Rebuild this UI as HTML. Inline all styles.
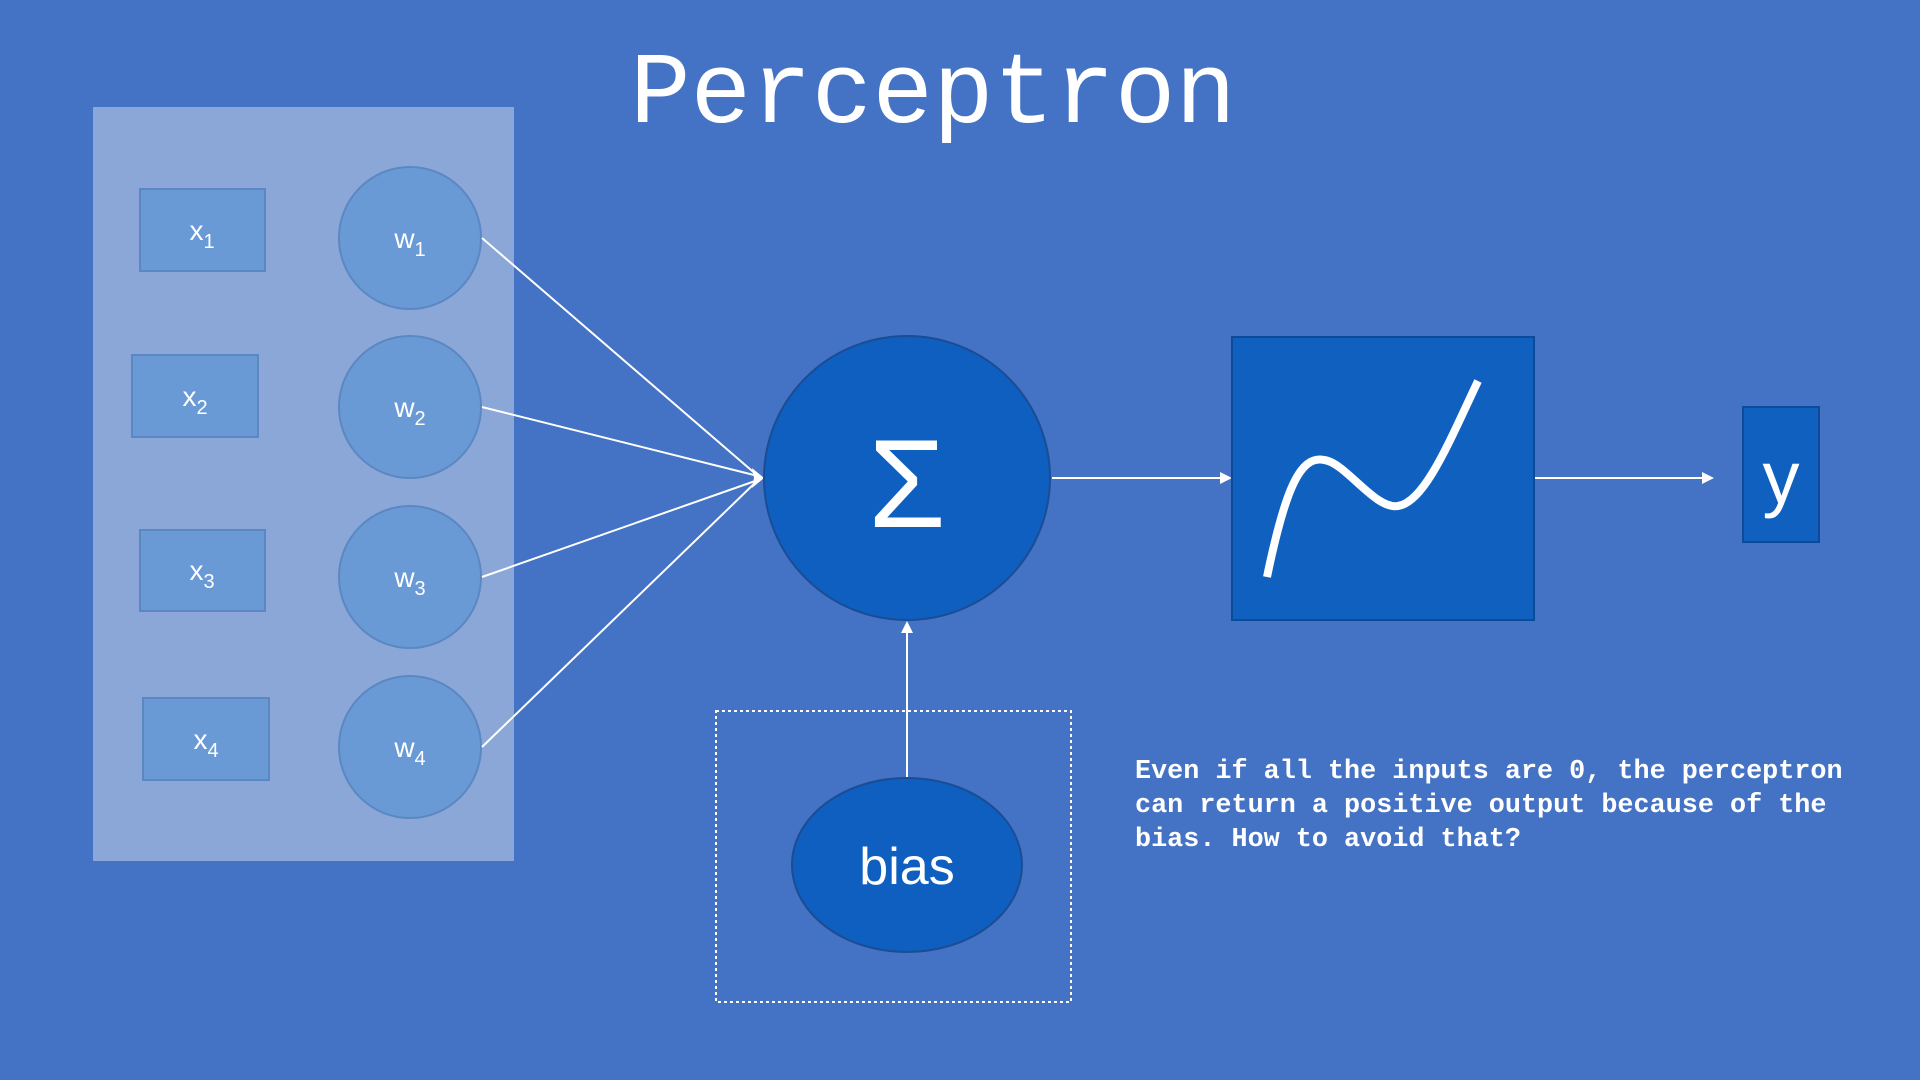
<!DOCTYPE html>
<html><head><meta charset="utf-8"><style>
html,body{margin:0;padding:0;width:1920px;height:1080px;overflow:hidden;background:#4472c4}
svg{display:block}
</style></head><body>
<svg width="1920" height="1080" viewBox="0 0 1920 1080" xmlns="http://www.w3.org/2000/svg">
<rect width="1920" height="1080" fill="#4472c4"/>
<text x="933" y="122" text-anchor="middle" font-family="Liberation Mono, monospace" font-size="101" fill="#fff">Perceptron</text>
<rect x="93" y="107" width="421" height="754" fill="#8aa7d7"/>
<g fill="#6a9ad6" stroke="#5b87c2" stroke-width="2">
<rect x="140" y="189" width="125" height="82"/>
<rect x="132" y="355" width="126" height="82"/>
<rect x="140" y="530" width="125" height="81"/>
<rect x="143" y="698" width="126" height="82"/>
<circle cx="410" cy="238" r="71"/>
<circle cx="410" cy="407" r="71"/>
<circle cx="410" cy="577" r="71"/>
<circle cx="410" cy="747" r="71"/>
</g>
<g font-family="Liberation Sans, sans-serif" fill="#fff" font-size="28" text-anchor="middle">
<text x="202" y="240">x<tspan font-size="20" dy="8">1</tspan></text>
<text x="195" y="406">x<tspan font-size="20" dy="8">2</tspan></text>
<text x="202" y="580">x<tspan font-size="20" dy="8">3</tspan></text>
<text x="206" y="749">x<tspan font-size="20" dy="8">4</tspan></text>
<text x="410" y="248">w<tspan font-size="20" dy="8">1</tspan></text>
<text x="410" y="417">w<tspan font-size="20" dy="8">2</tspan></text>
<text x="410" y="587">w<tspan font-size="20" dy="8">3</tspan></text>
<text x="410" y="757">w<tspan font-size="20" dy="8">4</tspan></text>
</g>
<g stroke="#fff" stroke-width="2" fill="none">
<line x1="482" y1="238" x2="758" y2="476"/>
<line x1="482" y1="407" x2="758" y2="476"/>
<line x1="482" y1="577" x2="758" y2="480"/>
<line x1="482" y1="747" x2="758" y2="480"/>
<line x1="1052" y1="478" x2="1222" y2="478"/>
<line x1="1534" y1="478" x2="1704" y2="478"/>
<line x1="907" y1="778" x2="907" y2="632"/>
</g>
<g fill="#fff">
<polygon points="764,478 752,468 754,478 752,488"/>
<polygon points="1232,478 1220,472 1220,484"/>
<polygon points="1714,478 1702,472 1702,484"/>
<polygon points="907,621 901,633 913,633"/>
</g>
<ellipse cx="907" cy="478" rx="143" ry="142" fill="#0f5fc0" stroke="#1a4d94" stroke-width="2"/>
<text x="907" y="527" text-anchor="middle" font-family="Liberation Sans, sans-serif" font-size="125" fill="#fff">Σ</text>
<rect x="1232" y="337" width="302" height="283" fill="#1060c0" stroke="#0d4a98" stroke-width="2"/>
<path d="M1267,577 C1285,490 1300,455 1324,460 C1345,462 1375,510 1398,506 C1425,502 1450,440 1478,381" stroke="#fff" stroke-width="8" fill="none"/>
<rect x="1743" y="407" width="76" height="135" fill="#1060c0" stroke="#0d4a98" stroke-width="2"/>
<text x="1781" y="503" text-anchor="middle" font-family="Liberation Sans, sans-serif" font-size="74" fill="#fff">y</text>
<rect x="716" y="711" width="355" height="291" fill="none" stroke="#fff" stroke-width="2" stroke-dasharray="3,3"/>
<ellipse cx="907" cy="865" rx="115" ry="87" fill="#0f5fc0" stroke="#1a4d94" stroke-width="2"/>
<text x="907" y="884" text-anchor="middle" font-family="Liberation Sans, sans-serif" font-size="52" fill="#fff">bias</text>
<g font-family="Liberation Mono, monospace" font-weight="bold" font-size="26.8" fill="#fff">
<text x="1135" y="778">Even if all the inputs are 0, the perceptron</text>
<text x="1135" y="812">can return a positive output because of the</text>
<text x="1135" y="846">bias. How to avoid that?</text>
</g>
</svg>
</body></html>
